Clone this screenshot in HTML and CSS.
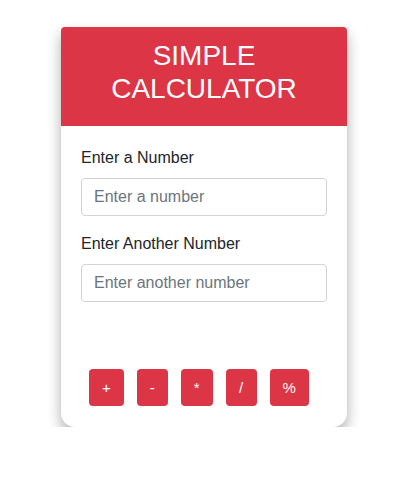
FILE: index.html
```html
<!DOCTYPE html>
<html>
<head>
<meta charset="utf-8">
<link rel="stylesheet" href="styles.css">
</head>
<body>
<div class="card">
  <div class="card-header">SIMPLE CALCULATOR</div>
  <div class="card-body">
    <label class="label">Enter a Number</label>
    <input class="field" type="text" placeholder="Enter a number">
    <label class="label">Enter Another Number</label>
    <input class="field" type="text" placeholder="Enter another number">
    <div class="result"></div>
    <div class="ops">
      <button class="op">+</button>
      <button class="op">-</button>
      <button class="op">*</button>
      <button class="op">/</button>
      <button class="op">%</button>
    </div>
  </div>
</div>
</body>
</html>
```
FILE: styles.css
```css
html, body { margin: 0; padding: 0; background: #fff; }
body {
  font-family: "Liberation Sans", Arial, sans-serif;
  color: #212529;
  padding-top: 27px;
}
.card {
  width: 286px;
  margin: 0 auto 0 61px;
  background: #fff;
  border-radius: 4px 4px 14px 14px;
  box-shadow: 0 7px 14px rgba(0,0,0,0.32);
  overflow: hidden;
}
.card-header {
  background: #dc3545;
  color: #fff;
  font-size: 28px;
  line-height: 33px;
  text-align: center;
  padding: 12px 40px 21px;
  height: 66px;
}
.card-body {
  padding: 22px 20px 21px;
  display: flex;
  flex-direction: column;
}
.label {
  font-size: 16px;
  line-height: 19px;
  margin-bottom: 11px;
}
.field {
  box-sizing: border-box;
  height: 38px;
  border: 1px solid #ced4da;
  border-radius: 4px;
  padding: 0 12px;
  font-family: inherit;
  font-size: 16px;
  color: #495057;
  margin-bottom: 18px;
  outline: none;
}
.field::placeholder { color: #6c757d; }
.result { height: 49px; }
.ops {
  display: flex;
  gap: 13px;
  padding-left: 8px;
}
.op {
  height: 37px;
  background: #dc3545;
  color: #fff;
  border: none;
  border-radius: 4px;
  font-family: inherit;
  font-size: 15px;
  padding: 0 13px;
  min-width: 31px;
}
```
